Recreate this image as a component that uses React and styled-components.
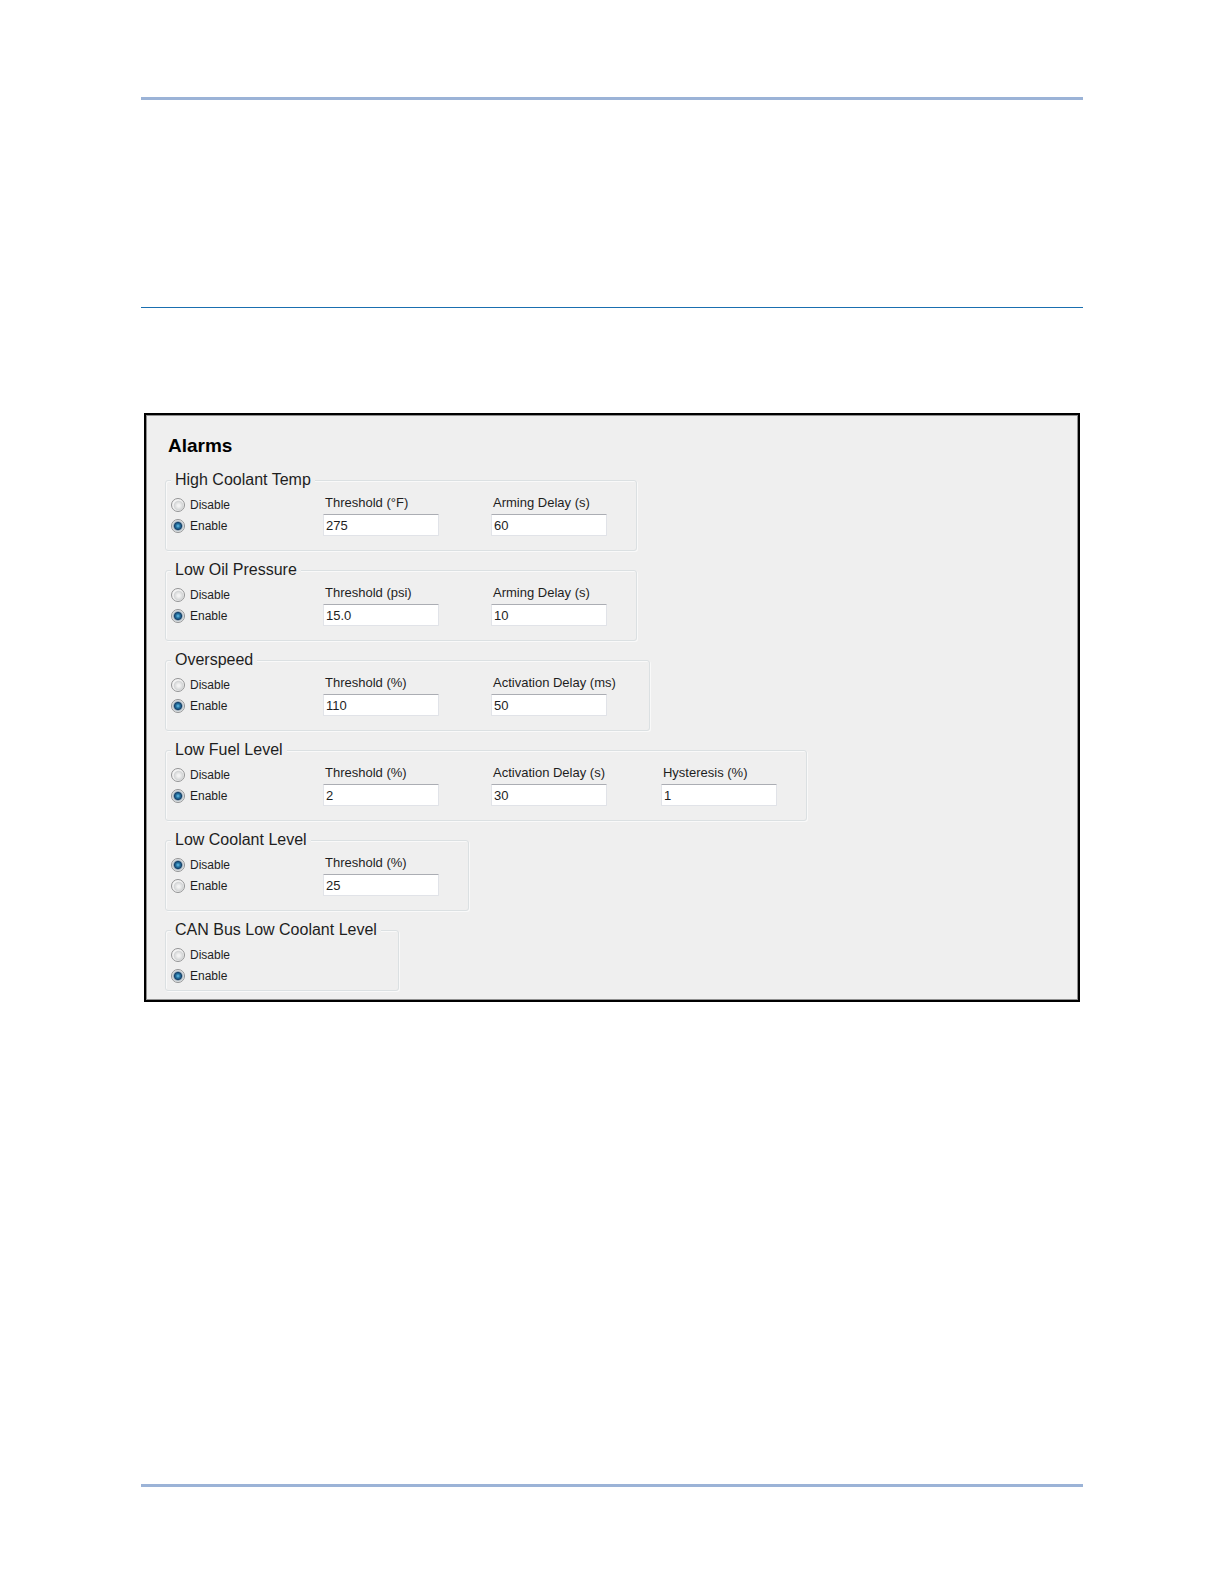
import React, { useId } from "react";
import styled, { createGlobalStyle } from "styled-components";

const GlobalStyle = createGlobalStyle`
  *, *::before, *::after {
    box-sizing: border-box;
  }
  body {
    margin: 0;
    background: #ffffff;
    color: #1e1e1e;
    font-family: "Liberation Sans", Arial, sans-serif;
  }
`;

const Sheet = styled.div`
  display: flex;
  flex-direction: column;
  min-height: 100vh;
  padding: 97px 141px;
`;

const PageRule = styled.hr`
  width: 100%;
  height: 3px;
  margin: ${(p) => (p.$end ? "auto 0 0" : "0")};
  border: 0;
  background: #9bb3d7;
`;

const SectionRule = styled.hr`
  width: 100%;
  height: 1px;
  margin: 207px 0 105px;
  border: 0;
  background: #1a6fb0;
`;

const Panel = styled.main`
  display: flex;
  flex-direction: column;
  margin: 0 3px;
  padding: 20px 19px 9px;
  border: 2px solid #000000;
  background: #efefef;
  box-shadow: inset 0 0 0 1px #8f8f8f;
`;

const Title = styled.h1`
  margin: 0 0 13px 3px;
  color: #000000;
  font-size: 19px;
  font-weight: 700;
  line-height: 22px;
`;

const GroupList = styled.form`
  display: flex;
  flex-direction: column;
  align-items: flex-start;
  gap: 9px;
`;

const Group = styled.fieldset`
  min-width: 0;
  margin: 0;
  padding: 0;
  border: 1px solid #dbe0e2;
  border-radius: 3px;
  box-shadow: 1px 1px 0 #f9f9f9, inset 1px 1px 0 #f9f9f9;
`;

const Legend = styled.legend`
  margin: 0 17px 0 5px;
  padding: 0 4px;
  background: #efefef;
  font-size: 16px;
  line-height: 20px;
`;

const GroupBody = styled.div`
  display: flex;
  align-items: flex-start;
  gap: 52px;
  padding: 5px 29px ${(p) => (p.$compact ? "3px" : "13px")} 5px;
`;

const Choices = styled.div`
  display: flex;
  flex-direction: column;
  width: 100px;
`;

const Choice = styled.label`
  display: flex;
  align-items: center;
  gap: 5px;
  height: 21px;
  font-size: 12px;
  line-height: 21px;
`;

const Radio = styled.input`
  appearance: none;
  flex: none;
  width: 14px;
  height: 14px;
  margin: 0 0 1px;
  border: 1px solid #929394;
  border-radius: 50%;
  background: radial-gradient(circle closest-side at 55% 55%, #f3f3f3 0 20%, #d3d5d6 80%, #f4f4f4 100%);

  &:checked {
    background: radial-gradient(
      circle closest-side at 50% 50%,
      #6cc0e6 0,
      #2a7cab 30%,
      #15426b 60%,
      #b5c0c8 78%,
      #eef0f1 100%
    );
  }
`;

const Field = styled.div`
  display: flex;
  flex-direction: column;
  gap: 4px;
`;

const FieldLabel = styled.label`
  padding: 0 4px 0 2px;
  font-size: 13px;
  line-height: 15px;
  white-space: nowrap;
`;

const TextBox = styled.input`
  width: 116px;
  height: 22px;
  padding: 0 2px;
  border: 1px solid #e1e3e8;
  border-top-color: #abadb3;
  border-radius: 1px;
  background: #ffffff;
  color: inherit;
  font-family: inherit;
  font-size: 13px;
  line-height: 20px;
`;

const ALARMS = [
  {
    name: "High Coolant Temp",
    state: "Enable",
    fields: [
      ["Threshold (°F)", "275"],
      ["Arming Delay (s)", "60"],
    ],
  },
  {
    name: "Low Oil Pressure",
    state: "Enable",
    fields: [
      ["Threshold (psi)", "15.0"],
      ["Arming Delay (s)", "10"],
    ],
  },
  {
    name: "Overspeed",
    state: "Enable",
    fields: [
      ["Threshold (%)", "110"],
      ["Activation Delay (ms)", "50"],
    ],
  },
  {
    name: "Low Fuel Level",
    state: "Enable",
    fields: [
      ["Threshold (%)", "2"],
      ["Activation Delay (s)", "30"],
      ["Hysteresis (%)", "1"],
    ],
  },
  {
    name: "Low Coolant Level",
    state: "Disable",
    fields: [["Threshold (%)", "25"]],
  },
  { name: "CAN Bus Low Coolant Level", state: "Enable", fields: [] },
];

function NumberField({ label, value }) {
  const id = useId();
  return (
    <Field>
      <FieldLabel htmlFor={id}>{label}</FieldLabel>
      <TextBox id={id} type="text" defaultValue={value} />
    </Field>
  );
}

function AlarmGroup({ name, state, fields }) {
  const id = useId();
  return (
    <Group>
      <Legend>{name}</Legend>
      <GroupBody $compact={fields.length === 0}>
        <Choices>
          {["Disable", "Enable"].map((option) => (
            <Choice key={option} htmlFor={`${id}-${option}`}>
              <Radio
                id={`${id}-${option}`}
                type="radio"
                name={id}
                value={option}
                defaultChecked={option === state}
              />
              {option}
            </Choice>
          ))}
        </Choices>
        {fields.map(([label, value]) => (
          <NumberField key={label} label={label} value={value} />
        ))}
      </GroupBody>
    </Group>
  );
}

export default function App() {
  return (
    <>
      <GlobalStyle />
      <Sheet>
        <PageRule />
        <SectionRule />
        <Panel>
          <Title>Alarms</Title>
          <GroupList>
            {ALARMS.map((alarm) => (
              <AlarmGroup key={alarm.name} {...alarm} />
            ))}
          </GroupList>
        </Panel>
        <PageRule $end />
      </Sheet>
    </>
  );
}
